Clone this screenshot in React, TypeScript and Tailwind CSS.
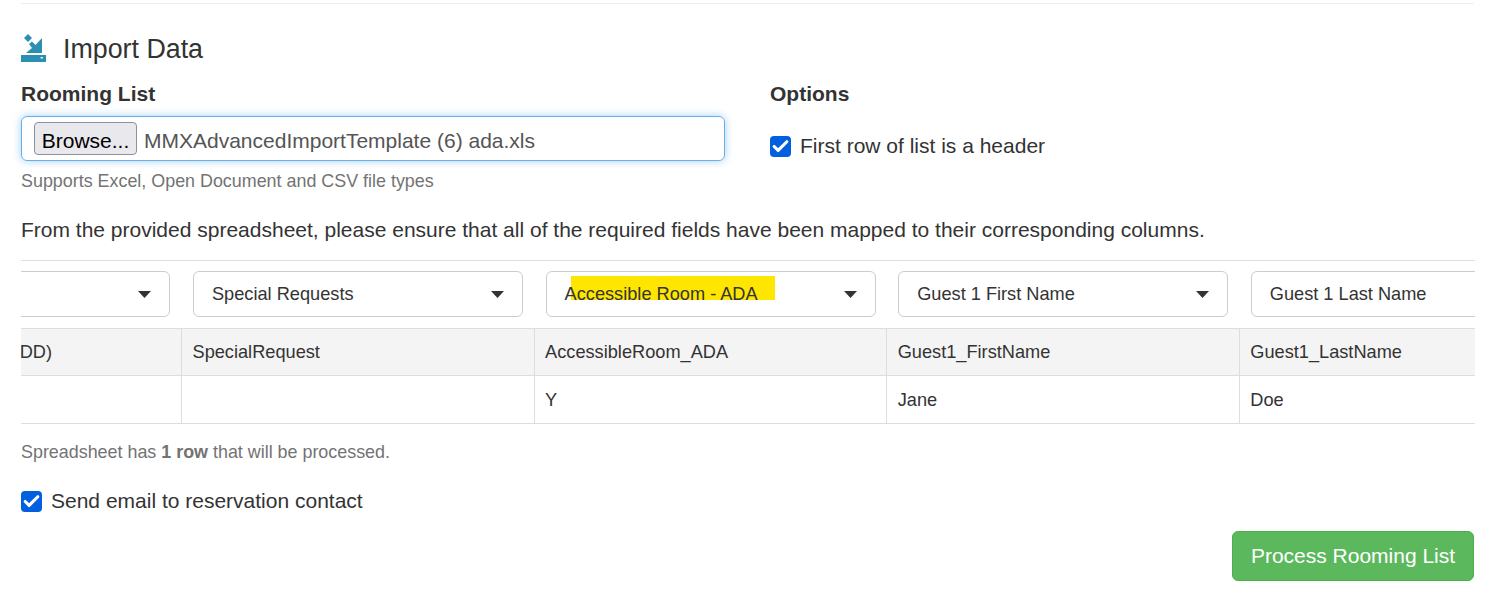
import React from 'react';
import { Check } from 'lucide-react';

const columns = [
  { mapped: '', header: 'DD)', value: '', first: true },
  { mapped: 'Special Requests', header: 'SpecialRequest', value: '' },
  { mapped: 'Accessible Room - ADA', header: 'AccessibleRoom_ADA', value: 'Y', marked: true },
  { mapped: 'Guest 1 First Name', header: 'Guest1_FirstName', value: 'Jane' },
  { mapped: 'Guest 1 Last Name', header: 'Guest1_LastName', value: 'Doe' },
];

function Checkbox() {
  return (
    <span className="flex h-[21px] w-[21px] shrink-0 items-center justify-center rounded-[4px] bg-[#0060df]">
      <Check className="h-[19px] w-[19px] text-white" strokeWidth={4} />
    </span>
  );
}

function ImportIcon() {
  return (
    <svg width="25" height="28" viewBox="0 0 25 28" className="shrink-0">
      <path d="M3 4 L7 0 L11 4 L7 8 Z" fill="#2a8fb0" />
      <path d="M21 4 V19 H5 L11 14 L8 10 L11 7.5 L14.5 11 Z" fill="#2a8fb0" />
      <path d="M0 21 H25 V28 H0 Z" fill="#2a8fb0" />
      <rect x="19.5" y="23" width="2.5" height="1.5" fill="#d8eef5" />
    </svg>
  );
}

function MapSelect({ label, marked }: { label: string; marked?: boolean }) {
  return (
    <div className="relative flex h-[46px] w-[330px] shrink-0 items-center justify-between rounded-[6px] border border-[#cccccc] bg-white pl-[18px] pr-[18px] text-[18.2px] text-[#333333]">
      {marked && <span className="absolute left-[24px] top-[4px] h-[24px] w-[204px] bg-[#ffe600]" />}
      <span className="relative pt-[2px]">{label}</span>
      <svg width="13" height="7" viewBox="0 0 13 7" className="relative shrink-0">
        <path d="M0 0 L13 0 L6.5 7 Z" fill="#333333" />
      </svg>
    </div>
  );
}

export default function App() {
  return (
    <div className="h-[607px] w-[1492px] overflow-hidden bg-white font-['Liberation_Sans',Arial,sans-serif] text-[#333333]">
      <div className="pl-[21px] pr-[18px] pt-[3px]">
        <div className="border-t border-[#eeeeee]" />

        {/* Header */}
        <div className="mt-[29px] flex h-[30px] items-center gap-[17px]">
          <ImportIcon />
          <h2 className="pt-[2px] text-[26.8px] leading-[30px]">Import Data</h2>
        </div>

        {/* File and options */}
        <div className="mt-[19px] flex">
          <div className="w-[749px]">
            <div className="text-[21px] font-bold leading-[23px]">Rooming List</div>
            <div className="mt-[11px] flex h-[45px] w-[704px] items-center rounded-[6px] border border-[#66afe9] pl-[12px] shadow-[0_0_8px_rgba(102,175,233,0.6)]">
              <button className="flex h-[33px] w-[103px] items-center justify-center rounded-[4px] border border-[#8f8f9d] bg-[#e9e9ed] pt-[4px] text-[21px] text-black">
                Browse...
              </button>
              <span className="ml-[7px] pt-[4px] text-[21px] text-[#555555]">MMXAdvancedImportTemplate (6) ada.xls</span>
            </div>
            <div className="mt-[10px] text-[17.9px] leading-[21px] text-[#737373]">Supports Excel, Open Document and CSV file types</div>
          </div>
          <div>
            <div className="text-[21px] font-bold leading-[23px]">Options</div>
            <label className="mt-[29px] flex items-center gap-[9px] text-[21px] leading-[24px]">
              <Checkbox />
              First row of list is a header
            </label>
          </div>
        </div>

        <p className="mt-[26px] text-[21px] leading-[24px]">
          From the provided spreadsheet, please ensure that all of the required fields have been mapped to their corresponding columns.
        </p>

        {/* Column mapping */}
        <div className="mt-[18px] w-[1454px] overflow-hidden border-t border-[#dddddd]">
          <div className="ml-[-181px] w-[1800px]">
            <div className="flex gap-[22.6px] pl-[0.4px] pt-[10px]">
              {columns.map((c) => (
                <MapSelect key={c.header} label={c.mapped} marked={c.marked} />
              ))}
            </div>
            <div className="ml-[-10.6px] mt-[11px] border-y border-[#dddddd]">
              <div className="flex h-[47px] border-b border-[#dddddd] bg-[#f4f4f4]">
                {columns.map((c) => (
                  <div key={c.header} className={`flex w-[352.6px] shrink-0 items-center border-r border-[#dddddd] pl-[10.5px] pt-[2px] text-[18.2px] ${c.first ? 'justify-end pr-[129px]' : ''}`}>
                    {c.header}
                  </div>
                ))}
              </div>
              <div className="flex h-[47px]">
                {columns.map((c) => (
                  <div key={c.header} className="flex w-[352.6px] shrink-0 items-center border-r border-[#dddddd] pl-[10.5px] pt-[2px] text-[18.2px]">
                    {c.value}
                  </div>
                ))}
              </div>
            </div>
          </div>
        </div>

        <div className="mt-[18px] text-[17.9px] leading-[21px] text-[#737373]">
          Spreadsheet has <b>1 row</b> that will be processed.
        </div>

        <label className="mt-[26px] flex items-center gap-[9px] text-[21px] leading-[24px]">
          <Checkbox />
          Send email to reservation contact
        </label>

        <div className="mt-[18px] flex justify-end">
          <button className="flex h-[50px] w-[242px] items-center justify-center rounded-[6px] border border-[#4cae4c] bg-[#5cb85c] text-[21px] text-white">
            Process Rooming List
          </button>
        </div>
      </div>
    </div>
  );
}
